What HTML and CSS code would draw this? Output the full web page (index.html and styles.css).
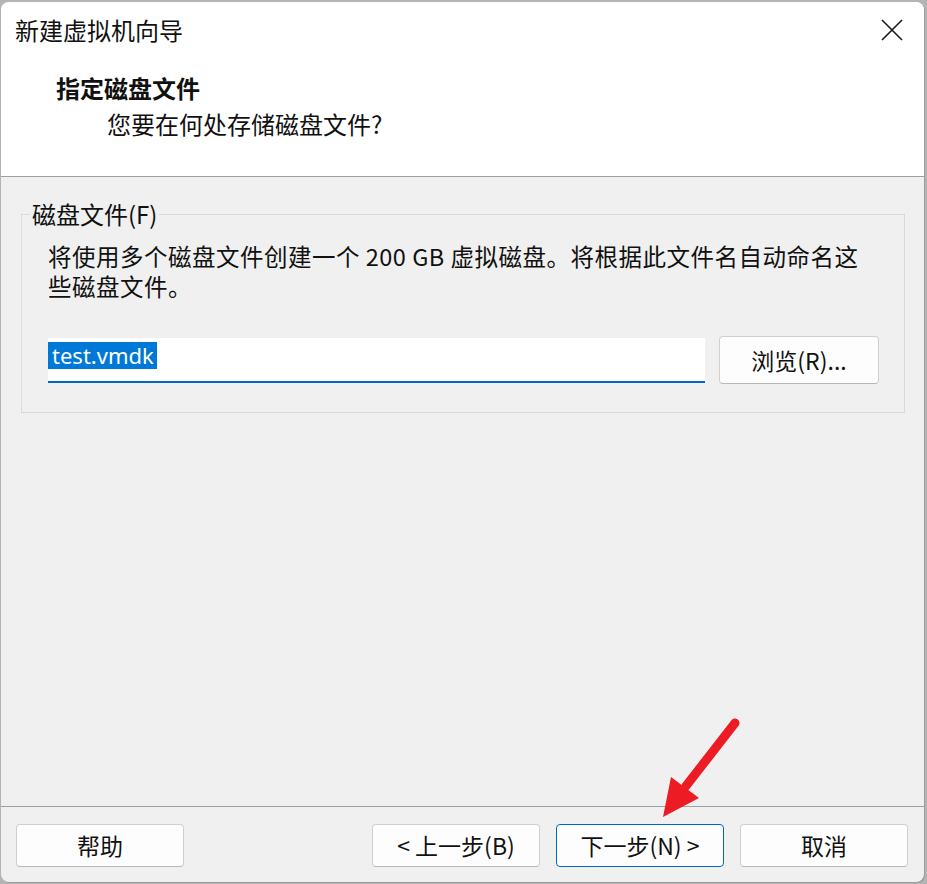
FILE: index.html
```html
<!DOCTYPE html>
<html lang="zh-CN">
<head>
<meta charset="utf-8">
<title>新建虚拟机向导</title>
<link rel="stylesheet" href="styles.css">
</head>
<body>
<div class="window">
  <div class="titlebar">
    <span class="title">新建虚拟机向导</span>
    <span class="close">
      <svg width="24" height="24" viewBox="0 0 24 24"><path d="M2 2 L22 22 M22 2 L2 22" stroke="#1a1a1a" stroke-width="1.6" fill="none"/></svg>
    </span>
  </div>
  <div class="header">
    <div class="h1">指定磁盘文件</div>
    <div class="h2">您要在何处存储磁盘文件?</div>
  </div>
  <div class="content">
    <fieldset class="group">
      <legend>磁盘文件(F)</legend>
      <p class="desc">将使用多个磁盘文件创建一个 200 GB 虚拟磁盘。将根据此文件名自动命名这些磁盘文件。</p>
      <div class="row">
        <div class="input"><span class="sel">test.vmdk</span></div>
        <button class="btn browse">浏览(R)...</button>
      </div>
    </fieldset>
  </div>
  <div class="footer">
    <button class="btn">帮助</button>
    <div class="spacer"></div>
    <button class="btn">&lt; 上一步(B)</button>
    <button class="btn default">下一步(N) &gt;</button>
    <button class="btn">取消</button>
  </div>
  <svg class="arrow" width="100" height="120" viewBox="0 0 100 120">
    <line x1="85" y1="13" x2="36" y2="76" stroke="#ed1c24" stroke-width="9" stroke-linecap="round"/>
    <polygon points="13,107 21,67 49,88" fill="#ed1c24"/>
  </svg>
</div>
</body>
</html>
```
FILE: styles.css
```css
html, body {
  margin: 0;
  padding: 0;
}
body {
  background: #b4b4b4;
  width: 927px;
  height: 884px;
  padding: 2px 0 0 1px;
  box-sizing: border-box;
  font-family: "Noto Sans CJK SC", "Noto Sans", sans-serif;
  color: #111;
  overflow: hidden;
}
.window {
  position: relative;
  width: 923px;
  height: 880px;
  background: #f0f0f0;
  border-radius: 8px;
  overflow: hidden;
  display: flex;
  flex-direction: column;
  box-shadow: 1px 1px 0 #9c9c9c;
}
.titlebar {
  height: 56px;
  background: #fff;
  display: flex;
  align-items: center;
  padding: 0 20px 0 14px;
}
.title {
  flex: 1;
  font-size: 24px;
  line-height: 56px;
  color: #111;
}
.close {
  display: flex;
  width: 24px;
  height: 24px;
}
.header {
  background: #fff;
  padding: 15px 0 37px 0;
  border-bottom: 1px solid #a0a0a0;
}
.h1 {
  font-size: 24px;
  font-weight: bold;
  line-height: 30px;
  padding-left: 55px;
}
.h2 {
  font-size: 24px;
  line-height: 30px;
  margin-top: 6px;
  padding-left: 106px;
}
.content {
  flex: 1;
  padding: 22px 19px 0 20px;
  border-bottom: 1px solid #a0a0a0;
}
.group {
  margin: 0;
  border: 1px solid #dadada;
  padding: 12px 25px 28px 26px;
}
.group legend {
  font-size: 24px;
  line-height: 30px;
  padding: 0 2px;
  margin-left: -18px;
}
.desc {
  margin: 0;
  font-size: 23.5px;
  line-height: 30px;
  letter-spacing: 0.5px;
}
.row {
  display: flex;
  align-items: center;
  gap: 14px;
  margin-top: 35px;
}
.input {
  flex: 1;
  background: #fff;
  border-bottom: 2px solid #0067c0;
  display: flex;
  align-items: flex-start;
  padding-top: 4px;
  box-sizing: content-box;
  height: 39px;
}
.sel {
  background: #0078d7;
  color: #fff;
  font-family: "Noto Sans", sans-serif;
  font-size: 22px;
  line-height: 27px;
  padding: 0 3px 0 4px;
}
.btn {
  font-family: "Noto Sans CJK SC", "Noto Sans", sans-serif;
  font-size: 23px;
  color: #111;
  background: #fdfdfd;
  border: 1px solid #d0d0d0;
  border-bottom-color: #b8b8b8;
  border-radius: 4px;
  height: 43px;
  width: 168px;
  padding: 0;
  line-height: 1;
}
.btn.browse {
  width: 160px;
  height: 48px;
}
.btn.default {
  border: 1px solid #0067c0;
}
.footer {
  display: flex;
  gap: 16px;
  padding: 17px 16px 15px 15px;
}
.spacer {
  flex: 1;
}
.arrow {
  position: absolute;
  left: 649px;
  top: 708px;
}
```
